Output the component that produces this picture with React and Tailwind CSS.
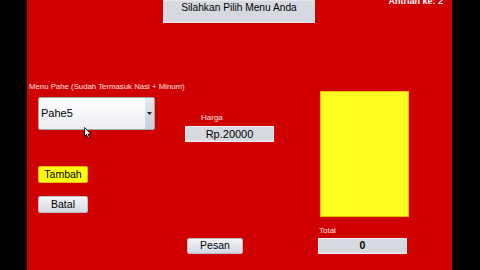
export default function App() {
  const f = { fontFamily: '"Liberation Sans", Arial, sans-serif' };
  return (
    <div className="w-[480px] h-[270px] bg-black flex overflow-hidden" style={f}>
      <div className="w-[27px] shrink-0" />
      <div className="w-[425px] h-[270px] bg-[#d00000] relative flex flex-col">
        {/* top row */}
        <div className="flex h-[23px]">
          <div className="w-[136px]" />
          <div className="w-[152px] h-[23px] bg-[#d6d9e0] border border-[#e8e8ec] flex items-center justify-center text-[10.2px] text-black leading-none pb-[6px]">
            Silahkan Pilih Menu Anda
          </div>
          <div className="flex-1" />
          <div className="absolute right-[9px] top-[-5px] text-white text-[9px] leading-[12px] font-bold">Antrian ke: 2</div>
        </div>
        <div className="flex mt-[59px]">
          {/* left column */}
          <div className="flex flex-col w-[150px] pl-[2px]">
            <div className="text-[7.8px] leading-[10px] text-[#ffe0e0] whitespace-nowrap">Menu Pahe (Sudah Termasuk Nasi + Minum)</div>
            <div className="ml-[9px] mt-[5px] w-[117px] h-[33px] bg-gradient-to-b from-white to-[#eceef2] border border-[#9aa] rounded-[2px] flex relative">
              <div className="flex-1 flex items-center pl-[2px] text-[11px] text-black">Pahe5</div>
              <div className="w-[9px] bg-gradient-to-b from-[#e6e8ee] to-[#c8ccd6] flex items-center justify-center">
                <svg width="5" height="3" viewBox="0 0 5 3"><path d="M0 0h5L2.5 3z" fill="#222" /></svg>
              </div>
              <svg className="absolute left-[45px] top-[29px]" width="8" height="12" viewBox="0 0 8 12">
                <path d="M0.5 0.5v9l2-2 1.5 3.5 1.5-0.7-1.5-3.3h3z" fill="white" stroke="black" strokeWidth="0.8" />
              </svg>
            </div>
            <div className="ml-[9px] mt-[36px] w-[50px] h-[17px] bg-[#ffff10] border border-[#e0c000] rounded-[2px] flex items-center justify-center text-[10.5px] text-black">Tambah</div>
            <div className="ml-[9px] mt-[13px] w-[50px] h-[17px] bg-gradient-to-b from-[#f4f5f8] to-[#d4d8e2] border border-[#b8bcc8] rounded-[2px] flex items-center justify-center text-[10.5px] text-black">Batal</div>
          </div>
          {/* middle column */}
          <div className="flex flex-col w-[140px] pl-[8px]">
            <div className="mt-[31px] ml-[16px] text-[8px] leading-[10px] text-[#ffe0e0]">Harga</div>
            <div className="mt-[3px] w-[89px] h-[16px] bg-[#d6d9e0] border border-[#f0f0f0] flex items-center justify-center text-[11px] text-black">Rp.20000</div>
            <div className="ml-[2px] mt-[96px] w-[56px] h-[16px] bg-gradient-to-b from-[#f4f5f8] to-[#d4d8e2] border border-[#b8bcc8] rounded-[2px] flex items-center justify-center text-[10.5px] text-black">Pesan</div>
          </div>
          {/* right column */}
          <div className="flex flex-col pl-[1px]">
            <div className="mt-[9px] ml-[2px] w-[89px] h-[126px] bg-[#ffff22] border border-[#e8c000]" />
            <div className="mt-[9px] ml-[1px] text-[8px] leading-[10px] text-[#ffe0e0]">Total</div>
            <div className="mt-[2px] w-[89px] h-[16px] bg-[#d6d9e0] border border-[#f0f0f0] flex items-center justify-center text-[10.5px] font-bold text-black">0</div>
          </div>
        </div>
      </div>
      <div className="flex-1" />
    </div>
  );
}
